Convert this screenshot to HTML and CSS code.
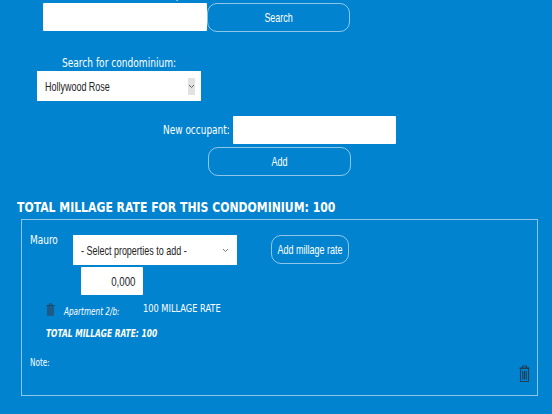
FILE: index.html
```html
<!DOCTYPE html>
<html lang="en">
<head>
    <meta charset="UTF-8">
    <meta name="viewport" content="width=device-width, initial-scale=1.0">
    <title>Condominium occupants</title>
    <link rel="stylesheet" href="styles.css">
</head>
<body>

    <!-- search occupant, scrolled partly out of view -->
    <div class="top-label"><span class="label-text">Search for occupant:</span></div>
    <div class="search-row">
        <input class="field search-field" type="text">
        <a class="btn search-btn" href="#"><span class="narrow-mid">Search</span></a>
    </div>

    <div class="condo-block">
        <div class="condo-label"><span class="label-mid">Search for condominium:</span></div>
        <div class="select condo-select">
            <span class="select-text narrow-left">Hollywood Rose</span>
            <span class="select-arrow boxed">
                <svg width="7" height="5" viewBox="0 0 7 5"><path d="M1 1l2.5 2.5L6 1" fill="none" stroke="#666" stroke-width="1"/></svg>
            </span>
        </div>
    </div>

    <div class="occupant-row">
        <span class="occupant-label"><span class="label-text">New occupant:</span></span>
        <input class="field occupant-field" type="text">
    </div>
    <a class="btn add-btn" href="#"><span class="narrow-mid">Add</span></a>

    <h2 class="total-title"><span class="title-text">TOTAL MILLAGE RATE FOR THIS CONDOMINIUM: 100</span></h2>

    <div class="occupant-box">
        <div class="box-top">
            <span class="occupant-name"><span class="label-text">Mauro</span></span>
            <div class="select property-select">
                <span class="select-text narrow-left">- Select properties to add -</span>
                <span class="select-arrow">
                    <svg width="7" height="5" viewBox="0 0 7 5"><path d="M1 1l2.5 2.5L6 1" fill="none" stroke="#777" stroke-width="1"/></svg>
                </span>
            </div>
            <a class="btn rate-btn" href="#"><span class="narrow-mid">Add millage rate</span></a>
        </div>
        <div class="field rate-field"><span class="rate-value">0,000</span></div>

        <div class="property-row">
            <svg class="trash-small" viewBox="0 0 10 14">
                <path d="M3.5 2V.8h3V2" fill="none" stroke="#1d4a6b" stroke-width="1"/>
                <path d="M.5 2h9v1.5H.5z" fill="#1d4a6b"/>
                <path d="M1.2 3.5h7.6V14H1.2z" fill="#1d5a85"/>
            </svg>
            <span class="property-name"><span class="small-text">Apartment 2/b:</span></span>
            <span class="property-rate"><span class="rate-text">100 MILLAGE RATE</span></span>
        </div>
        <div class="property-total"><span class="total-text">TOTAL MILLAGE RATE: 100</span></div>

        <div class="note-row">
            <span class="note"><span class="small-text">Note:</span></span>
            <svg class="trash-big" viewBox="0 0 11 17">
                <path d="M3.5 3V1h4v2" fill="none" stroke="#1f3f58" stroke-width="1.1"/>
                <path d="M.5 3.2h10" stroke="#1f3f58" stroke-width="1.6"/>
                <path d="M1.5 4v12.5h8V4M3.8 6v8.5M5.5 6v8.5M7.2 6v8.5" fill="none" stroke="#1f3f58" stroke-width="1.1"/>
            </svg>
        </div>
    </div>

</body>
</html>
```

FILE: styles.css
```css
:root {
    --page-bg: #0283d0;
    --line: rgba(255, 255, 255, 0.55);
    --narrow: 'Liberation Sans', Arial, sans-serif;
    --label: 'DejaVu Sans Condensed', 'DejaVu Sans', sans-serif;
}

body {
    margin: 0;
    height: 414px;
    overflow: hidden;
    background: var(--page-bg);
    color: white;
    font-family: var(--label);
    font-size: 12px;
    white-space: nowrap;
}

a {
    text-decoration: none;
    color: white;
}

/* the app's text is drawn tall and thin, so squeeze it sideways */
.label-text,
.label-mid,
.narrow-left,
.narrow-mid,
.title-text,
.small-text,
.total-text,
.rate-text,
.rate-value {
    display: inline-block;
    transform-origin: left center;
}

.label-text {
    transform: scaleX(0.83);
}

.label-mid {
    transform: scaleX(0.84);
    transform-origin: center;
}

.narrow-left {
    transform: scaleX(0.69);
}

.narrow-mid {
    transform: scaleX(0.69);
    transform-origin: center;
}

.title-text {
    transform: scaleX(0.864);
}

.small-text {
    transform: scaleX(0.81);
}

.total-text {
    transform: scaleX(0.835);
}

.rate-text {
    transform: scaleX(0.834);
}

.rate-value {
    transform: scaleX(0.75);
    transform-origin: right center;
}

.top-label {
    height: 14px;
    margin-top: -11px;
    padding-left: 106px;
    line-height: 11px;
}

.field {
    box-sizing: border-box;
    display: block;
    background: white;
    border: 0;
    border-radius: 1px;
    margin: 0;
    font-family: var(--narrow);
    font-size: 13px;
    color: #222;
}

.btn {
    box-sizing: border-box;
    display: flex;
    align-items: center;
    justify-content: center;
    border: 1px solid var(--line);
    border-radius: 10px;
    font-family: var(--narrow);
    font-size: 13px;
}

.search-row {
    display: flex;
    padding-left: 43px;
}

.search-field {
    width: 164px;
    height: 28px;
}

.search-btn {
    width: 143px;
    height: 29px;
}

.condo-block {
    width: 164px;
    margin: 23px 0 0 37px;
}

.condo-label {
    height: 16px;
    line-height: 16px;
    display: flex;
    justify-content: center;
}

.select {
    box-sizing: border-box;
    display: flex;
    align-items: center;
    height: 30px;
    width: 164px;
    background: white;
    color: #222;
    font-family: var(--narrow);
    font-size: 13px;
}

.select-text {
    flex: 1;
    min-width: 0;
}

.condo-select {
    padding: 0 6px 0 8px;
}

.property-select {
    margin-left: 24px;
    padding: 0 8px;
}

.select-arrow {
    display: flex;
    align-items: center;
    justify-content: center;
}

.boxed {
    width: 7px;
    height: 17px;
    background: #e2e2e2;
}

.occupant-row {
    display: flex;
    align-items: center;
    margin-top: 15px;
    padding-left: 163px;
}

.occupant-label {
    width: 70px;
}

.occupant-field {
    width: 163px;
    height: 28px;
}

.add-btn {
    width: 143px;
    height: 29px;
    margin: 3px 0 0 208px;
}

.total-title {
    margin: 23px 0 0 17px;
    height: 16px;
    line-height: 16px;
    font-size: 14px;
    font-weight: bold;
}

.occupant-box {
    box-sizing: border-box;
    width: 517px;
    height: 177px;
    margin: 4px 0 0 21px;
    padding: 15px 8px 0 8px;
    border: 1px solid var(--line);
}

.box-top {
    display: flex;
    align-items: flex-start;
}

.occupant-name {
    width: 19px;
    margin-top: -2px;
    line-height: 14px;
}

.rate-btn {
    width: 78px;
    height: 29px;
    margin-left: 34px;
}

.rate-field {
    display: flex;
    align-items: center;
    justify-content: flex-end;
    width: 62px;
    height: 28px;
    margin: 2px 0 0 51px;
    padding-right: 7px;
}

.property-row {
    display: flex;
    align-items: flex-start;
    margin-top: 8px;
    padding-left: 16px;
}

.trash-small {
    width: 9px;
    height: 13px;
}

.property-name {
    margin: 3px 0 0 9px;
    width: 79px;
    font-size: 10px;
    font-style: italic;
}

.property-rate {
    font-size: 11px;
    line-height: 12px;
}

.property-total {
    margin: 11px 0 0 16px;
    font-size: 10px;
    font-weight: bold;
    font-style: italic;
}

.note-row {
    display: flex;
    justify-content: space-between;
    align-items: flex-start;
    margin-top: 18px;
    margin-right: -1px;
}

.note {
    font-size: 10px;
}

.trash-big {
    width: 11px;
    height: 17px;
    margin-top: 8px;
}
```
